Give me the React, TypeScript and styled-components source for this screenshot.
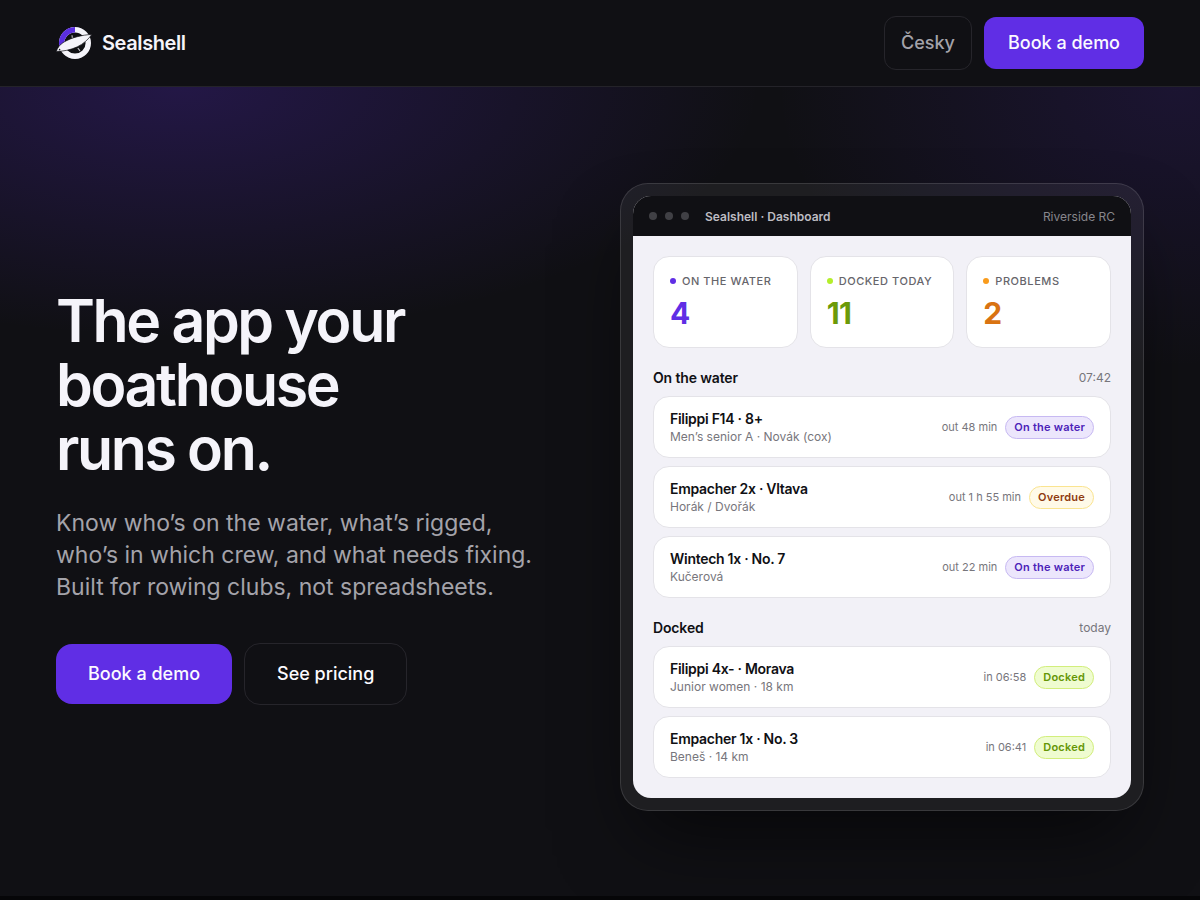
import React from "react";
import styled, { createGlobalStyle } from "styled-components";

const GlobalStyle = createGlobalStyle`
  *, *::before, *::after { box-sizing: border-box; }
  body {
    margin: 0;
    background: #060608;
    color: #f5f4fa;
    font-family: Inter, "Liberation Sans", sans-serif;
    -webkit-font-smoothing: antialiased;
  }
  h1, h2, h3, p, ul, dl, dd { margin: 0; padding: 0; }
  ul { list-style: none; }
`;

const Header = styled.header`
  display: flex;
  align-items: center;
  justify-content: space-between;
  padding: 16px 56px;
  background: #101014;
  border-bottom: 1px solid #242329;
`;

const Brand = styled.a`
  display: flex;
  align-items: center;
  gap: 10px;
  color: #f5f4fa;
  font-size: 20px;
  font-weight: 600;
  letter-spacing: -0.02em;
  text-decoration: none;
`;

const Actions = styled.div`
  display: flex;
  align-items: center;
  gap: 12px;
`;

const Button = styled.button<{ $primary?: boolean; $muted?: boolean; $large?: boolean }>`
  padding: ${(p) => (p.$large ? "18px 32px" : p.$muted ? "14px 16px" : "14px 24px")};
  border: ${(p) => (p.$primary ? "0" : "1px solid #26252b")};
  border-radius: ${(p) => (p.$large ? "16px" : "12px")};
  background: ${(p) => (p.$primary ? "#602ee5" : "transparent")};
  color: ${(p) => (p.$muted ? "#a4a3aa" : "#fbfaff")};
  font-family: inherit;
  font-size: 18px;
  font-weight: 500;
  line-height: 24px;
  cursor: pointer;
`;

const Hero = styled.main`
  display: grid;
  grid-template-columns: 1fr 1fr;
  align-items: center;
  gap: 40px;
  padding: 96px 56px 85px;
  background:
    radial-gradient(ellipse 580px 250px at 15% 0%, rgba(96, 46, 229, 0.24), rgba(96, 46, 229, 0) 100%),
    radial-gradient(ellipse 400px 280px at 98% 0%, rgba(96, 46, 229, 0.14), rgba(96, 46, 229, 0) 100%),
    #101014;
`;

const Intro = styled.section`
  display: flex;
  flex-direction: column;
  align-items: flex-start;
`;

const Title = styled.h1`
  font-size: 59px;
  font-weight: 600;
  line-height: 64px;
  letter-spacing: -0.04em;
`;

const Lead = styled.p`
  margin-top: 26px;
  color: #a4a3aa;
  font-size: 23px;
  line-height: 32px;
`;

const HeroActions = styled(Actions)`
  margin-top: 40px;
`;

const Frame = styled.section`
  padding: 12px;
  border: 1px solid rgba(255, 255, 255, 0.12);
  border-radius: 28px;
  background: rgba(255, 255, 255, 0.06);
  box-shadow: 0 40px 80px -20px rgba(0, 0, 0, 0.6);
`;

const Screen = styled.div`
  overflow: hidden;
  border-radius: 18px;
  background: #f2f1f7;
  color: #101014;
`;

const TitleBar = styled.div`
  display: flex;
  align-items: center;
  gap: 16px;
  height: 40px;
  padding: 0 16px;
  background: #101014;
  font-size: 12px;
`;

const Lights = styled.div`
  display: flex;
  gap: 8px;
`;

const Light = styled.span`
  width: 8px;
  height: 8px;
  border-radius: 50%;
  background: #404045;
`;

const AppName = styled.span`
  flex: 1;
  color: #bdbcc2;
  font-weight: 600;
`;

const Club = styled.span`
  color: #87868c;
`;

const Content = styled.div`
  display: flex;
  flex-direction: column;
  gap: 20px;
  padding: 20px;
`;

const Stats = styled.dl`
  display: grid;
  grid-template-columns: repeat(3, 1fr);
  gap: 12px;
`;

const Stat = styled.div`
  padding: 16px;
  border: 1px solid #e4e3e8;
  border-radius: 16px;
  background: #fff;
`;

const StatLabel = styled.dt<{ $dot: string }>`
  display: flex;
  align-items: center;
  gap: 6px;
  color: #66656b;
  font-size: 11px;
  font-weight: 500;
  line-height: 16px;
  letter-spacing: 0.05em;
  text-transform: uppercase;
  white-space: nowrap;

  &::before {
    content: "";
    width: 6px;
    height: 6px;
    border-radius: 50%;
    background: ${(p) => p.$dot};
  }
`;

const StatValue = styled.dd<{ $color: string }>`
  margin-top: 6px;
  color: ${(p) => p.$color};
  font-size: 30px;
  font-weight: 700;
  line-height: 36px;
  letter-spacing: -0.02em;
`;

const GroupHead = styled.div`
  display: flex;
  align-items: center;
  justify-content: space-between;
  margin-bottom: 8px;
  line-height: 20px;
`;

const GroupTitle = styled.h2`
  font-size: 14px;
  font-weight: 600;
  letter-spacing: -0.01em;
`;

const GroupNote = styled.span`
  color: #77767c;
  font-size: 12px;
`;

const Boats = styled.ul`
  display: flex;
  flex-direction: column;
  gap: 8px;
`;

const Boat = styled.li`
  display: flex;
  align-items: center;
  gap: 8px;
  padding: 12px 16px;
  border: 1px solid #e4e3e8;
  border-radius: 16px;
  background: #fff;
`;

const BoatText = styled.div`
  flex: 1;
`;

const BoatName = styled.h3`
  font-size: 14px;
  font-weight: 600;
  line-height: 20px;
  letter-spacing: -0.02em;
`;

const Crew = styled.p`
  color: #77767c;
  font-size: 12px;
  line-height: 16px;
`;

const Time = styled.span`
  color: #77767c;
  font-size: 11px;
`;

const tones = {
  water: { text: "#4b22b8", fill: "#ece6fc", line: "#c7b9f2" },
  overdue: { text: "#8f3a10", fill: "#fffae8", line: "#fae490" },
  docked: { text: "#659606", fill: "#effcd0", line: "#d2ee7c" },
};

type Tone = keyof typeof tones;

const Badge = styled.span<{ $tone: Tone }>`
  padding: 3px 8px;
  border: 1px solid ${(p) => tones[p.$tone].line};
  border-radius: 12px;
  background: ${(p) => tones[p.$tone].fill};
  color: ${(p) => tones[p.$tone].text};
  font-size: 11px;
  font-weight: 600;
  line-height: 15px;
  letter-spacing: 0.02em;
`;

const stats = [
  { label: "On the water", value: 4, dot: "#602ee5", color: "#602ee5" },
  { label: "Docked today", value: 11, dot: "#b4ee2b", color: "#6b9a08" },
  { label: "Problems", value: 2, dot: "#f99b1c", color: "#d97312" },
];

const groups: {
  title: string;
  note: string;
  boats: { name: string; crew: string; time: string; status: string; tone: Tone }[];
}[] = [
  {
    title: "On the water",
    note: "07:42",
    boats: [
      { name: "Filippi F14 · 8+", crew: "Men’s senior A · Novák (cox)", time: "out 48 min", status: "On the water", tone: "water" },
      { name: "Empacher 2x · Vltava", crew: "Horák / Dvořák", time: "out 1 h 55 min", status: "Overdue", tone: "overdue" },
      { name: "Wintech 1x · No. 7", crew: "Kučerová", time: "out 22 min", status: "On the water", tone: "water" },
    ],
  },
  {
    title: "Docked",
    note: "today",
    boats: [
      { name: "Filippi 4x- · Morava", crew: "Junior women · 18 km", time: "in 06:58", status: "Docked", tone: "docked" },
      { name: "Empacher 1x · No. 3", crew: "Beneš · 14 km", time: "in 06:41", status: "Docked", tone: "docked" },
    ],
  },
];

const Logo = () => (
  <svg width="36" height="36" viewBox="0 0 36 36" aria-hidden="true">
    <g fill="none" strokeWidth="5.4">
      <circle cx="19" cy="18" r="13.3" stroke="#f5f4fa" />
      <path d="M6 21A13.3 13.3 0 0 1 19 4.7" stroke="#5b2ee0" />
    </g>
    <path d="M16 10.2l.4 3M21.8 23l2.2 2.8" stroke="#c4c3c9" strokeWidth="1.1" />
    <path
      d="M0.2 26.4C1.6 22.6 4 19.4 8 17C16 12.4 26 10 35.8 9.4C32.4 14.4 27.4 18.8 21.4 21.8C14.6 25 7 26.4 0.2 26.4Z"
      fill="#f5f4fa"
      stroke="#101014"
      strokeWidth="0.7"
    />
    <circle cx="3.6" cy="24.6" r="0.8" fill="#101014" />
  </svg>
);

export default function App() {
  return (
    <>
      <GlobalStyle />
      <Header>
        <Brand href="#">
          <Logo />
          Sealshell
        </Brand>
        <Actions>
          <Button $muted>Česky</Button>
          <Button $primary>Book a demo</Button>
        </Actions>
      </Header>
      <Hero>
        <Intro>
          <Title>
            The app your
            <br />
            boathouse
            <br />
            runs on.
          </Title>
          <Lead>
            Know who’s on the water, what’s rigged,
            <br />
            who’s in which crew, and what needs fixing.
            <br />
            Built for rowing clubs, not spreadsheets.
          </Lead>
          <HeroActions>
            <Button $primary $large>Book a demo</Button>
            <Button $large>See pricing</Button>
          </HeroActions>
        </Intro>
        <Frame>
          <Screen>
            <TitleBar>
              <Lights>
                <Light />
                <Light />
                <Light />
              </Lights>
              <AppName>Sealshell · Dashboard</AppName>
              <Club>Riverside RC</Club>
            </TitleBar>
            <Content>
              <Stats>
                {stats.map((s) => (
                  <Stat key={s.label}>
                    <StatLabel $dot={s.dot}>{s.label}</StatLabel>
                    <StatValue $color={s.color}>{s.value}</StatValue>
                  </Stat>
                ))}
              </Stats>
              {groups.map((g) => (
                <section key={g.title}>
                  <GroupHead>
                    <GroupTitle>{g.title}</GroupTitle>
                    <GroupNote>{g.note}</GroupNote>
                  </GroupHead>
                  <Boats>
                    {g.boats.map((b) => (
                      <Boat key={b.name}>
                        <BoatText>
                          <BoatName>{b.name}</BoatName>
                          <Crew>{b.crew}</Crew>
                        </BoatText>
                        <Time>{b.time}</Time>
                        <Badge $tone={b.tone}>{b.status}</Badge>
                      </Boat>
                    ))}
                  </Boats>
                </section>
              ))}
            </Content>
          </Screen>
        </Frame>
      </Hero>
    </>
  );
}
